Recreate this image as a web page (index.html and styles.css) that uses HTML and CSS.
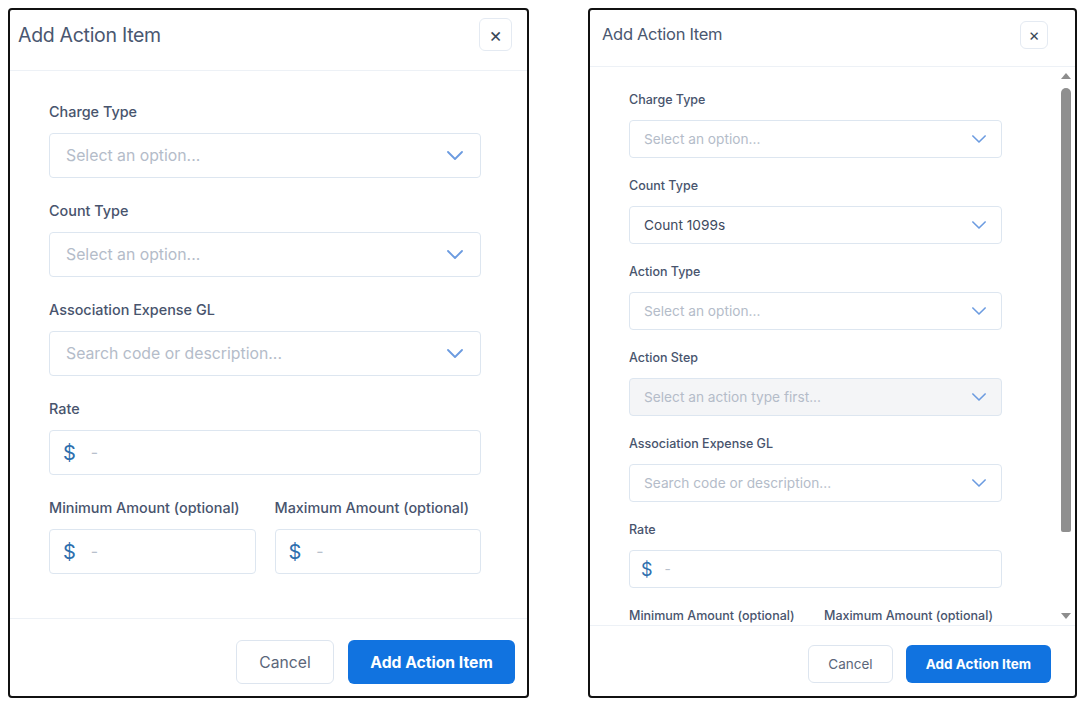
FILE: index.html
```html
<!DOCTYPE html>
<html>
  <head>
    <meta charset="utf-8">
    <title>Add Action Item</title>
    <link rel="stylesheet" href="styles.css">
  </head>
  <body>
    <!-- full size dialog -->
    <div class="modal modal-large">
      <div class="modal-header">
        <h2 class="modal-title">Add Action Item</h2>
        <button class="close-btn">&times;</button>
      </div>
      <div class="modal-body">
        <div class="field">
          <label class="field-label">Charge Type</label>
          <div class="select">
            <span class="placeholder">Select an option...</span>
            <svg class="chevron" viewBox="0 0 16 9"><polyline points="1,1 8,8 15,1"/></svg>
          </div>
        </div>
        <div class="field">
          <label class="field-label">Count Type</label>
          <div class="select">
            <span class="placeholder">Select an option...</span>
            <svg class="chevron" viewBox="0 0 16 9"><polyline points="1,1 8,8 15,1"/></svg>
          </div>
        </div>
        <div class="field">
          <label class="field-label">Association Expense GL</label>
          <div class="select">
            <span class="placeholder">Search code or description...</span>
            <svg class="chevron" viewBox="0 0 16 9"><polyline points="1,1 8,8 15,1"/></svg>
          </div>
        </div>
        <div class="field">
          <label class="field-label">Rate</label>
          <div class="money">
            <span class="dollar">$</span>
            <span class="dash">-</span>
          </div>
        </div>
        <div class="field-row">
          <div class="field">
            <label class="field-label">Minimum Amount (optional)</label>
            <div class="money">
              <span class="dollar">$</span>
              <span class="dash">-</span>
            </div>
          </div>
          <div class="field">
            <label class="field-label">Maximum Amount (optional)</label>
            <div class="money">
              <span class="dollar">$</span>
              <span class="dash">-</span>
            </div>
          </div>
        </div>
      </div>
      <div class="modal-footer">
        <button class="btn btn-cancel">Cancel</button>
        <button class="btn btn-primary">Add Action Item</button>
      </div>
    </div>

    <!-- compact dialog with scrolling body -->
    <div class="modal modal-small">
      <div class="modal-header">
        <h2 class="modal-title">Add Action Item</h2>
        <button class="close-btn">&times;</button>
      </div>
      <div class="scroll-wrap">
        <div class="modal-body">
          <div class="field">
            <label class="field-label">Charge Type</label>
            <div class="select">
              <span class="placeholder">Select an option...</span>
              <svg class="chevron" viewBox="0 0 16 9"><polyline points="1,1 8,8 15,1"/></svg>
            </div>
          </div>
          <div class="field">
            <label class="field-label">Count Type</label>
            <div class="select">
              <span class="value">Count 1099s</span>
              <svg class="chevron" viewBox="0 0 16 9"><polyline points="1,1 8,8 15,1"/></svg>
            </div>
          </div>
          <div class="field">
            <label class="field-label">Action Type</label>
            <div class="select">
              <span class="placeholder">Select an option...</span>
              <svg class="chevron" viewBox="0 0 16 9"><polyline points="1,1 8,8 15,1"/></svg>
            </div>
          </div>
          <div class="field">
            <label class="field-label">Action Step</label>
            <div class="select disabled">
              <span class="placeholder">Select an action type first...</span>
              <svg class="chevron" viewBox="0 0 16 9"><polyline points="1,1 8,8 15,1"/></svg>
            </div>
          </div>
          <div class="field">
            <label class="field-label">Association Expense GL</label>
            <div class="select">
              <span class="placeholder">Search code or description...</span>
              <svg class="chevron" viewBox="0 0 16 9"><polyline points="1,1 8,8 15,1"/></svg>
            </div>
          </div>
          <div class="field">
            <label class="field-label">Rate</label>
            <div class="money">
              <span class="dollar">$</span>
              <span class="dash">-</span>
            </div>
          </div>
          <div class="field-row">
            <div class="field">
              <label class="field-label">Minimum Amount (optional)</label>
            </div>
            <div class="field">
              <label class="field-label">Maximum Amount (optional)</label>
            </div>
          </div>
        </div>
        <div class="scrollbar">
          <span class="arrow-up"></span>
          <span class="thumb"></span>
          <span class="arrow-down"></span>
        </div>
      </div>
      <div class="modal-footer">
        <button class="btn btn-cancel">Cancel</button>
        <button class="btn btn-primary">Add Action Item</button>
      </div>
    </div>
  </body>
</html>
```

FILE: styles.css
```css
body
{
  margin: 0;
  padding: 8px;
  display: flex;
  gap: 59px;
  background: #ffffff;
  font-family: Inter, "Noto Sans", sans-serif;
  color: #475470;
}

.modal
{
  box-sizing: border-box;
  height: 690px;
  border: 2px solid #111111;
  border-radius: 4px;
  background: #ffffff;
  display: flex;
  flex-direction: column;
  overflow: hidden;
}

.modal-header
{
  display: flex;
  justify-content: space-between;
  align-items: flex-start;
  border-bottom: 1px solid #edf1f6;
  flex-shrink: 0;
}

.modal-title
{
  margin: 0;
  font-weight: 400;
  color: #4a5770;
  letter-spacing: -0.3px;
}

.close-btn
{
  box-sizing: border-box;
  border: 1px solid #e4eaf2;
  border-radius: 6px;
  background: #ffffff;
  color: #3c4858;
  padding: 0;
  font-family: inherit;
  display: flex;
  align-items: center;
  justify-content: center;
}

.modal-body
{
  flex: 1;
  min-height: 0;
  overflow: hidden;
  display: flex;
  flex-direction: column;
}

.field
{
  display: flex;
  flex-direction: column;
  min-width: 0;
}

.field-label
{
  font-weight: 500;
  color: #48546d;
  white-space: nowrap;
}

.field-row
{
  display: grid;
  grid-template-columns: 1fr 1fr;
}

.select, .money
{
  box-sizing: border-box;
  display: flex;
  align-items: center;
  flex-shrink: 0;
  border: 1.5px solid #dde6f0;
  border-radius: 4px;
  background: #ffffff;
}

.select.disabled
{
  background: #f4f5f7;
}

.placeholder
{
  flex: 1;
  color: #b4bcc9;
}

.value
{
  flex: 1;
  color: #3e4a5e;
}

.chevron
{
  fill: none;
  stroke: #6b9be0;
  stroke-width: 1.8;
  stroke-linecap: round;
  stroke-linejoin: round;
}

.dollar
{
  color: #2d6fae;
}

.dash
{
  color: #b8c0cc;
}

.modal-footer
{
  display: flex;
  justify-content: flex-end;
  align-items: flex-start;
  border-top: 1px solid #edf1f6;
}

.btn
{
  box-sizing: border-box;
  font-family: inherit;
  border-radius: 6px;
  cursor: pointer;
  padding: 0;
  white-space: nowrap;
}

.btn-cancel
{
  background: #ffffff;
  border: 1.5px solid #dde5ef;
  color: #5b6679;
}

.btn-primary
{
  background: #1173e0;
  border: none;
  color: #ffffff;
  font-weight: 700;
}

/* large dialog */
.modal-large
{
  width: 521px;
}

.modal-large .modal-header
{
  height: 61px;
  padding: 8px 15px 0 8px;
  box-sizing: border-box;
}

.modal-large .modal-title
{
  font-size: 19.5px;
  line-height: 34px;
}

.modal-large .close-btn
{
  width: 33px;
  height: 33px;
  font-size: 20px;
}

.modal-large .modal-body
{
  padding: 32px 46px 0 39px;
  gap: 24px;
}

.modal-large .field-label
{
  font-size: 14.4px;
  line-height: 18px;
  margin-bottom: 12px;
}

.modal-large .field-row
{
  column-gap: 19px;
}

.modal-large .select,
.modal-large .money
{
  height: 45px;
  padding: 0 17px 0 16px;
  font-size: 15.8px;
}

.modal-large .money
{
  padding-left: 13px;
}

.modal-large .chevron
{
  width: 16px;
  height: 9px;
}

.modal-large .dollar
{
  font-size: 20px;
  margin-right: 15px;
}

.modal-large .modal-footer
{
  flex: none;
  height: 78px;
  box-sizing: border-box;
  padding: 21px 12px 0 0;
  gap: 14px;
}

.modal-large .btn
{
  height: 44px;
  font-size: 15.7px;
}

.modal-large .btn-cancel
{
  width: 98px;
}

.modal-large .btn-primary
{
  width: 167px;
}

/* compact dialog */
.modal-small
{
  width: 489px;
}

.modal-small .modal-header
{
  height: 57px;
  padding: 10px 27px 0 12px;
  box-sizing: border-box;
}

.modal-small .modal-title
{
  font-size: 16.5px;
  line-height: 28px;
}

.modal-small .close-btn
{
  width: 28px;
  height: 28px;
  font-size: 17px;
  margin-top: 1px;
}

.scroll-wrap
{
  height: 558px;
  flex-shrink: 0;
  display: flex;
}

.modal-small .modal-body
{
  padding: 25px 54px 0 39px;
  gap: 20px;
}

.modal-small .field-label
{
  font-size: 12.5px;
  line-height: 16px;
  margin-bottom: 12px;
}

.modal-small .field-row
{
  column-gap: 17px;
}

.modal-small .select,
.modal-small .money
{
  height: 38px;
  padding: 0 15px 0 14px;
  font-size: 13.7px;
}

.modal-small .money
{
  padding-left: 11px;
}

.modal-small .chevron
{
  width: 14px;
  height: 8px;
}

.modal-small .dollar
{
  font-size: 18px;
  margin-right: 12px;
}

.scrollbar
{
  width: 19px;
  flex-shrink: 0;
  display: flex;
  flex-direction: column;
  align-items: center;
  background: #ffffff;
}

.arrow-up
{
  margin-top: 6px;
  border-left: 5px solid transparent;
  border-right: 5px solid transparent;
  border-bottom: 6px solid #8d8d8d;
}

.thumb
{
  margin-top: 9px;
  width: 10px;
  height: 444px;
  border-radius: 5px 5px 2px 2px;
  background: #8f8f8f;
}

.arrow-down
{
  margin-top: auto;
  margin-bottom: 6px;
  border-left: 5px solid transparent;
  border-right: 5px solid transparent;
  border-top: 6px solid #8d8d8d;
}

.modal-small .modal-footer
{
  flex: 1;
  padding: 19px 24px 0 0;
  gap: 13px;
}

.modal-small .btn
{
  height: 38px;
  font-size: 13.5px;
}

.modal-small .btn-cancel
{
  width: 85px;
}

.modal-small .btn-primary
{
  width: 145px;
}
```
